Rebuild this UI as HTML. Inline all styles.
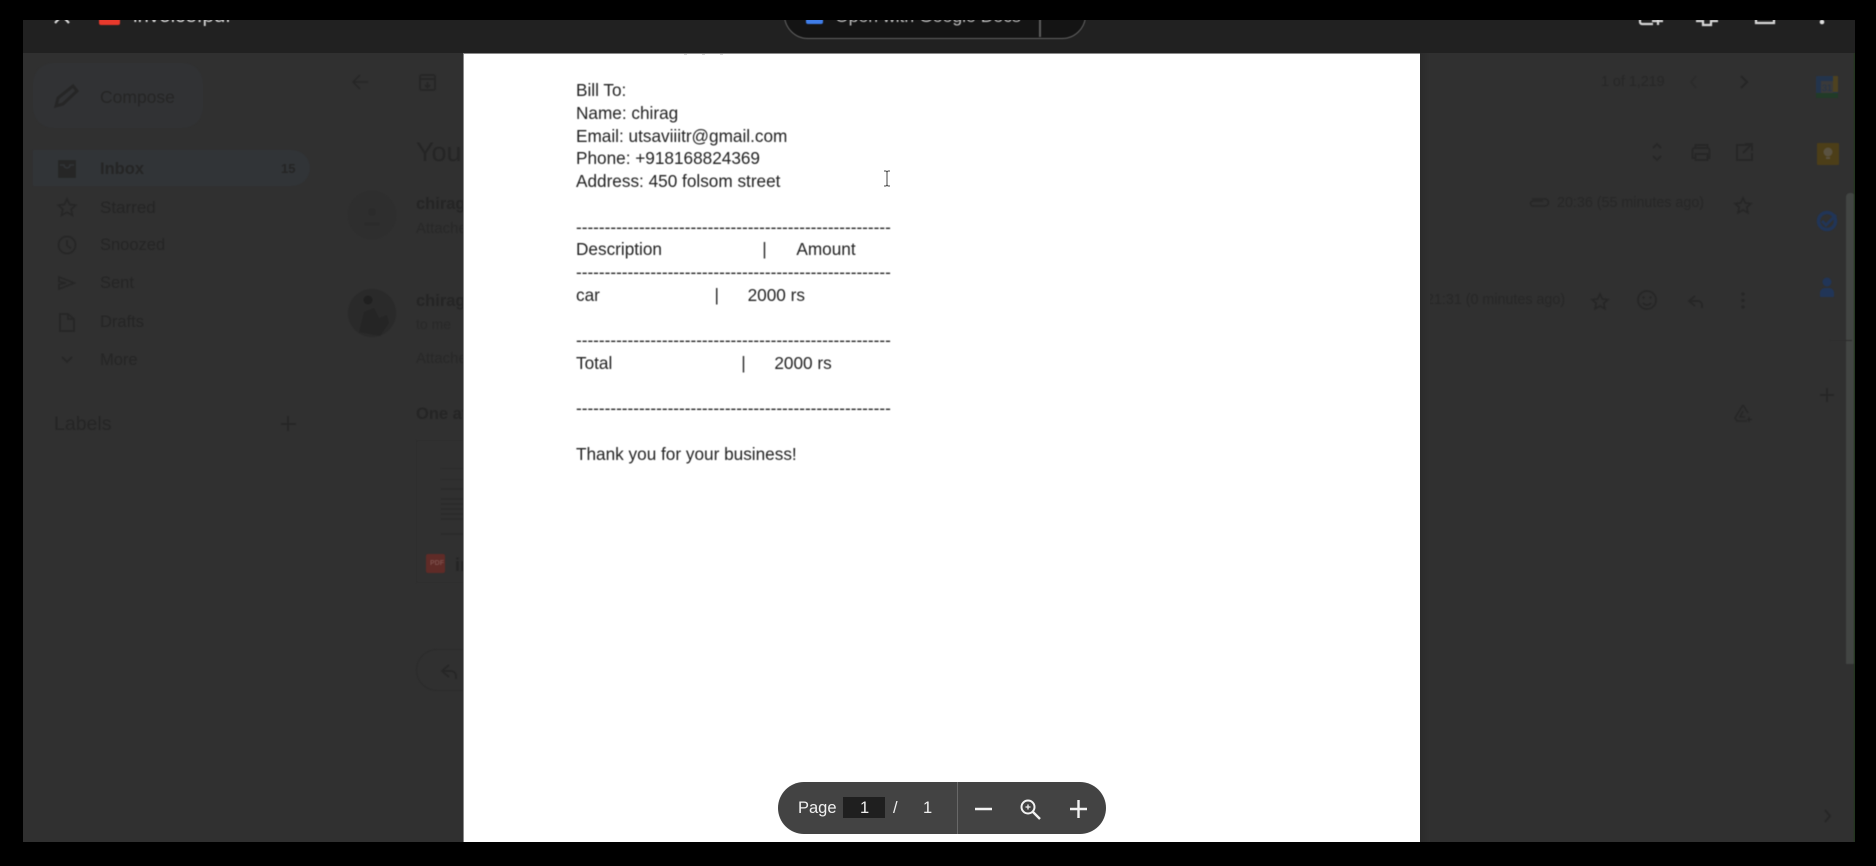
<!DOCTYPE html>
<html><head><meta charset="utf-8"><title>invoice.pdf</title>
<style>
html,body{margin:0;padding:0;background:#000;width:1876px;height:866px;overflow:hidden;font-family:"Liberation Sans",sans-serif}
#frame{position:absolute;left:23px;top:20px;width:1832px;height:822px;background:#303030;overflow:hidden}
#inner{position:absolute;left:-23px;top:-20px;width:1876px;height:866px}
.t{position:absolute;white-space:pre;line-height:1}
.bg{filter:blur(.65px)}
.d{color:#252525}
#hdr{position:absolute;left:0;top:0;width:1876px;height:53px;background:#212121}
#paper{position:absolute;left:463px;top:53px;width:957px;height:800px;background:#fff;border-left:1px solid #8a8a8a;border-top:1px solid #8a8a8a;box-sizing:border-box}
.p{position:absolute;left:576px;font-size:17.2px;line-height:20px;color:#222;white-space:pre;filter:blur(.4px);margin-top:-.5px}
svg{position:absolute;left:0;top:0;overflow:visible}
</style></head><body>
<div id="frame"><div id="inner">
<div id="hdr"></div>
<div class="bg">
<div style="position:absolute;left:33px;top:63px;width:170px;height:65px;border-radius:20px;background:#313234"></div>
<div style="position:absolute;left:33px;top:150px;width:277px;height:36px;border-radius:0 18px 18px 0;background:#313437"></div>
<div class="t d" style="left:100px;top:88.500px;font-size:17.500px">Compose</div>
<div class="t d" style="left:100px;top:161px;font-size:16.500px;font-weight:bold">Inbox</div>
<div class="t d" style="left:281px;top:162px;font-size:13px;font-weight:bold">15</div>
<div class="t d" style="left:100px;top:198.500px;font-size:17px">Starred</div>
<div class="t d" style="left:100px;top:237px;font-size:16.500px">Snoozed</div>
<div class="t d" style="left:100px;top:275px;font-size:16.500px">Sent</div>
<div class="t d" style="left:100px;top:313.500px;font-size:16.500px">Drafts</div>
<div class="t d" style="left:100px;top:351.500px;font-size:16.500px">More</div>
<div class="t d" style="left:54px;top:415px;font-size:19.500px">Labels</div>
<div class="t d" style="left:416px;top:139px;font-size:27px">Your</div>
<div class="t d" style="left:416px;top:196px;font-size:16.500px;font-weight:bold">chirag</div>
<div class="t" style="left:416px;top:221px;font-size:15px;color:#282828">Attached</div>
<div class="t d" style="left:416px;top:293px;font-size:16.500px;font-weight:bold">chirag</div>
<div class="t" style="left:416px;top:317px;font-size:14px;color:#292929">to me</div>
<div class="t" style="left:416px;top:351px;font-size:15px;color:#282828">Attached</div>
<div class="t d" style="left:416px;top:406px;font-size:16.500px;font-weight:bold">One attachment</div>
<div class="t" style="left:1601px;top:75px;font-size:14.300px;color:#272727">1 of 1,219</div>
<div class="t" style="left:1557px;top:196px;font-size:14.300px;color:#272727">20:36 (55 minutes ago)</div>
<div class="t" style="left:1426px;top:293px;font-size:14.300px;color:#272727">21:31 (0 minutes ago)</div>
<div style="position:absolute;left:416px;top:440px;width:60px;height:143px;border:1px solid #2d2d2d;box-sizing:border-box"></div>
<div style="position:absolute;left:441px;top:468px;width:30px;height:1px;background:#2b2b2b"></div>
<div style="position:absolute;left:441px;top:479px;width:30px;height:1px;background:#2b2b2b"></div>
<div style="position:absolute;left:441px;top:488px;width:22px;height:2px;background:#2b2b2b"></div>
<div style="position:absolute;left:441px;top:498px;width:22px;height:24px;background:repeating-linear-gradient(#2b2b2b 0 2px,transparent 2px 5px)"></div>
<div style="position:absolute;left:441px;top:533px;width:22px;height:2px;background:#2b2b2b"></div>
<div style="position:absolute;left:426px;top:554px;width:19px;height:19px;background:#5f2b27;border-radius:2px"></div>
<div class="t" style="left:430px;top:560px;font-size:7px;font-weight:bold;color:#7c4f4b">PDF</div>
<div class="t d" style="left:455px;top:556px;font-size:18px;font-weight:bold">in</div>
<div style="position:absolute;left:416px;top:649px;width:80px;height:42px;border:1px solid #2b2b2b;border-radius:21px;box-sizing:border-box"></div>
<div style="position:absolute;left:1846px;top:193px;width:9px;height:471px;border-radius:4px 4px 0 0;background:#424543"></div>
<div style="position:absolute;left:1854px;top:53px;width:1px;height:789px;background:#1c3a14"></div>
<div style="position:absolute;left:1830px;top:340px;width:22px;height:1px;background:#2c2c2c"></div>
<svg width="1876" height="866" viewBox="0 0 1876 866">
 <g fill="none" stroke="#262626" stroke-width="1.700">
  <path d="M56 106l2-8 15-12 4 5-14 13z" stroke-width="3"/>
  <path d="M59 161h16v16H59z" fill="#262626"/>
  <path d="M60 165h4a3 3 0 0 0 6 0h4" stroke="#313437" stroke-width="1.600"/>
  <path d="M67 199l2.600 5.500 6 .7-4.400 4.100 1.200 6-5.400-3-5.400 3 1.200-6-4.400-4.100 6-.7z"/>
  <circle cx="67" cy="245" r="8.500"/><path d="M67 240v5.500l4 3"/>
  <path d="M59 277l15 6-15 6v-4.600l7-1.400-7-1.400z"/>
  <path d="M60 314h8l6 5v12H60z"/><path d="M68 314v5h6"/>
  <path d="M62 357l5 5 5-5"/>
  <path d="M288 416v15M281 424h15"/>
  <path d="M368 82h-14M360 75l-7 7 7 7" stroke-width="1.500"/>
  <rect x="420" y="75" width="15" height="15" rx="1.500"/><path d="M420 79h15M427.500 82v5M425 85l2.500 2.500L430 85"/>
  <path d="M449 677l-7-6 7-6M442 671h9a5 5 0 0 1 5 5v3"/>
  <path d="M1653 148l4-4 4 4M1653 156l4 4 4-4"/>
  <path d="M1696 158h-3v-8a2 2 0 0 1 2-2h13a2 2 0 0 1 2 2v8h-3M1696 148v-3h12v3M1696 154h12v6h-12z" transform="translate(-.5 0)"/>
  <path d="M1750 146v-1h-13v15h15v-7M1743 153l8-8M1745 144h7v7"/>
  <path d="M1532 199h13a3.500 3.500 0 0 1 0 7h-12a2.500 2.500 0 0 1 0-5h10" stroke-width="1.500"/>
  <path d="M1743 198l2.300 5 5.500.6-4 3.700 1.100 5.400-4.900-2.700-4.900 2.700 1.100-5.400-4-3.700 5.500-.6z"/>
  <path d="M1600 294l2.300 5 5.500.6-4 3.700 1.100 5.400-4.900-2.700-4.900 2.700 1.100-5.400-4-3.700 5.500-.6z"/>
  <circle cx="1647" cy="300" r="9"/><path d="M1643 303a5 5 0 0 0 8 0"/>
  <path d="M1695 296l-6 5 6 5M1689 301h9a4 4 0 0 1 4 4v3"/>
  <path d="M1696 76l-5 6 5 6" stroke="#2b2b2b"/>
  <path d="M1741 76l6 6-6 6" stroke-width="2.100"/>
  <path d="M1743 405l-8 13 2 3h10M1743 405l5 8M1743 411l-3 6h5" stroke-width="1.500"/><path d="M1749 417v5M1747 419.500h5" stroke-width="1.200"/>
  <path d="M1827 388v14M1820 395h14"/>
  <path d="M1825 810l5 6-5 6" stroke-width="2"/>
 </g>
 <g fill="#262626">
  <circle cx="1743" cy="294" r="1.600"/><circle cx="1743" cy="300.500" r="1.600"/><circle cx="1743" cy="307" r="1.600"/>
  <circle cx="1643.500" cy="297.500" r="1.200"/><circle cx="1650.500" cy="297.500" r="1.200"/>
 </g>
 <circle cx="372" cy="215" r="24" fill="#2e2e2e"/>
 <circle cx="372" cy="212" r="4" fill="#2b2b2b"/><path d="M364 224h16" stroke="#2b2b2b" stroke-width="3"/>
 <circle cx="372" cy="313" r="24" fill="#2a2a2a"/>
 <circle cx="368" cy="300" r="4.500" fill="#202020"/>
 <path d="M359 332l5-20 10-4 5 10 8-3 2 8-9 13z" fill="#252525"/>
 <rect x="1816" y="76" width="22" height="22" rx="1" fill="#23344c"/>
 <rect x="1821" y="81" width="12" height="12" fill="#3a3a3a"/>
 <text x="1827" y="91" font-size="9" font-family="Liberation Sans" text-anchor="middle" fill="#23344c">31</text>
 <path d="M1833 76h5v16h-5z" fill="#4e4220"/><path d="M1816 93h22v5h-22z" fill="#213b27"/>
 <rect x="1817" y="143" width="22" height="22" rx="1" fill="#4c3e18"/>
 <circle cx="1828" cy="152" r="4.500" fill="#5a5240"/><rect x="1826" y="157" width="4" height="2" fill="#5a5240"/>
 <circle cx="1827" cy="221" r="8.500" fill="none" stroke="#213557" stroke-width="3.500"/>
 <path d="M1822 221l4 4 10-10" fill="none" stroke="#213557" stroke-width="3"/>
 <circle cx="1827" cy="282" r="4.500" fill="#213557"/><path d="M1820 297v-5a5 5 0 0 1 5-4h4a5 5 0 0 1 5 4v5z" fill="#213557"/>
</svg>
</div>

<!-- chrome top bar clipped -->
<div style="filter:blur(.6px)">
<div style="position:absolute;left:784px;top:-10px;width:302px;height:48.500px;border:1.500px solid #636363;border-radius:24px;background:#141414;box-sizing:border-box"></div>
<div style="position:absolute;left:1039px;top:15px;width:1.500px;height:22px;background:#5c5c5c"></div>
<div style="position:absolute;left:806px;top:10px;width:17px;height:14px;background:#3f7de8;border-radius:2px"></div>
<div class="t" style="left:835px;top:7.500px;font-size:17.600px;color:#bdbdbd">Open with Google Docs</div>
<div style="position:absolute;left:99px;top:10px;width:21px;height:15px;background:#e8392c;border-radius:2px"></div>
<div class="t" style="left:133px;top:6px;font-size:20.500px;color:#d6d6d6">invoice.pdf</div>
<svg width="1876" height="866"><g fill="none" stroke="#d8d8d8" stroke-width="2.200">
 <path d="M55 8l14 15M69 8L55 23"/>
 <path d="M1640 10v12a2 2 0 0 0 2 2h11M1652 21h11M1658 14v11"/>
 <path d="M1696 21h7v4h8v-4h7"/>
 <path d="M1756 10v13h18V10"/>
 </g><circle cx="1822" cy="22" r="2.300" fill="#e0e0e0"/></svg>
</div>

<div id="paper"></div>
<div style="position:absolute;left:1420px;top:53px;width:10px;height:789px;background:linear-gradient(90deg,#2b2b2b,#303030)"></div>
<div style="position:absolute;left:684px;top:54px;width:52px;height:1px;background:repeating-linear-gradient(90deg,#d8d8d8 0 3px,transparent 3px 18px)"></div>

<div class="p" style="top:80px">Bill To:</div>
<div class="p" style="top:103px">Name: chirag</div>
<div class="p" style="top:126px">Email: utsaviiitr@gmail.com</div>
<div class="p" style="top:148px">Phone: +918168824369</div>
<div class="p" style="top:171px">Address: 450 folsom street</div>
<div class="p" style="top:217px">-------------------------------------------------------</div>
<div class="p" style="top:239px">Description                     |      <span style="margin-left:1px">Amount</span></div>
<div class="p" style="top:262px">-------------------------------------------------------</div>
<div class="p" style="top:285px">car                        |      2000 rs</div>
<div class="p" style="top:330px">-------------------------------------------------------</div>
<div class="p" style="top:353px">Total                           |      2000 rs</div>
<div class="p" style="top:398px">-------------------------------------------------------</div>
<div class="p" style="top:444px">Thank you for your business!</div>

<svg width="1876" height="866" style="filter:blur(.3px)"><path d="M884 171h2l1 1 1-1h2M887 172v13M884 186h2l1-1 1 1h2" fill="none" stroke="#444" stroke-width="1"/></svg>

<!-- PDF toolbar -->
<div style="position:absolute;left:778px;top:782px;width:328px;height:52px;border-radius:26px;background:#434343;filter:blur(.3px)"></div>
<div style="position:absolute;left:957px;top:782px;width:1px;height:52px;background:#686868"></div>
<div style="position:absolute;left:843px;top:797px;width:42px;height:21px;background:#1f1f1f"></div>
<div class="t" style="left:798px;top:800px;font-size:16.500px;color:#f0f0f0;filter:blur(.3px)">Page</div>
<div class="t" style="left:860px;top:800px;font-size:16.500px;color:#f0f0f0;filter:blur(.3px)">1</div>
<div class="t" style="left:893px;top:800px;font-size:16.500px;color:#f0f0f0;filter:blur(.3px)">/</div>
<div class="t" style="left:923px;top:800px;font-size:16.500px;color:#f0f0f0;filter:blur(.3px)">1</div>
<svg width="1876" height="866" style="filter:blur(.3px)"><g fill="none" stroke="#f2f2f2" stroke-width="2.400">
 <path d="M975 809h17"/>
 <circle cx="1028" cy="807" r="6.500" stroke-width="2"/>
 <path d="M1033 812l7 7"/>
 <path d="M1025.500 807h5M1028 804.500v5" stroke-width="1.300"/>
 <path d="M1070 809h17M1078.500 800v18"/>
</g></svg>
</div></div>
</body></html>
